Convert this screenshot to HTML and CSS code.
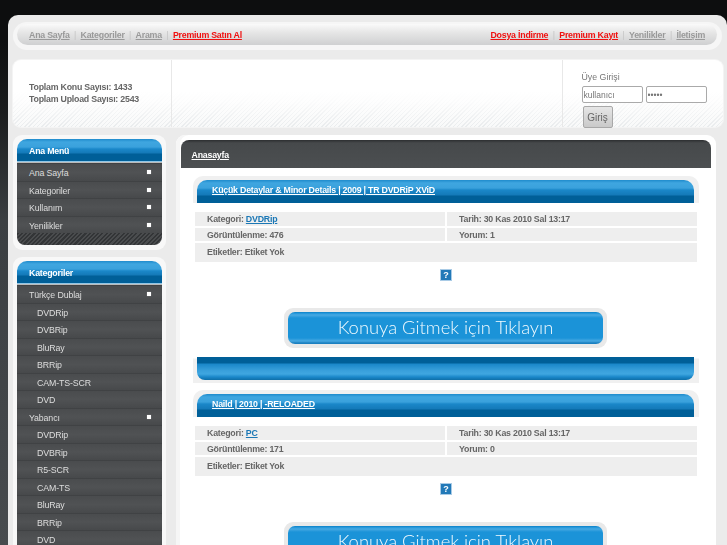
FILE: index.html
```html
<!DOCTYPE html>
<html lang="tr">
<head>
<meta charset="utf-8">
<title>Anasayfa</title>
<link rel="stylesheet" href="styles.css">
</head>
<body>
<div class="page">
  <nav class="topnav">
    <div class="topbar">
      <div class="links">
        <a href="#">Ana Sayfa</a><i>|</i><a href="#">Kategoriler</a><i>|</i><a href="#">Arama</a><i>|</i><a class="red" href="#">Premium Satın Al</a>
      </div>
      <div class="links">
        <a class="red" href="#">Dosya İndirme</a><i>|</i><a class="red" href="#">Premium Kayıt</a><i>|</i><a href="#">Yenilikler</a><i>|</i><a href="#">İletişim</a>
      </div>
    </div>
  </nav>
  <section class="info">
    <div class="stats">
      <p>Toplam Konu Sayısı: 1433</p>
      <p>Toplam Upload Sayısı: 2543</p>
    </div>
    <div class="blank"></div>
    <form class="login">
      <div class="login-title">Üye Girişi</div>
      <div class="login-fields">
        <input class="field" type="text" value="kullanıcı">
        <input class="field" type="password" value="*****">
      </div>
      <button class="submit" type="button">Giriş</button>
    </form>
  </section>
  <div class="columns">
    <aside class="sidebar">
      <div class="box">
        <h3 class="box-title">Ana Menü</h3>
        <ul class="menu">
          <li class="top">Ana Sayfa</li>
          <li class="top">Kategoriler</li>
          <li class="top">Kullanım</li>
          <li class="top">Yenilikler</li>
        </ul>
        <div class="menu-end"></div>
      </div>
      <div class="box">
        <h3 class="box-title">Kategoriler</h3>
        <ul class="menu">
          <li class="top">Türkçe Dublaj</li>
          <li class="sub">DVDRip</li>
          <li class="sub">DVBRip</li>
          <li class="sub">BluRay</li>
          <li class="sub">BRRip</li>
          <li class="sub">CAM-TS-SCR</li>
          <li class="sub">DVD</li>
          <li class="top">Yabancı</li>
          <li class="sub">DVDRip</li>
          <li class="sub">DVBRip</li>
          <li class="sub">R5-SCR</li>
          <li class="sub">CAM-TS</li>
          <li class="sub">BluRay</li>
          <li class="sub">BRRip</li>
          <li class="sub">DVD</li>
        </ul>
      </div>
    </aside>
    <main class="main">
      <h2 class="main-title"><a href="#">Anasayfa</a></h2>
      <div class="posts">
        <article class="post">
          <div class="post-head"><h4 class="post-bar"><a href="#">Küçük Detaylar &amp; Minor Details | 2009 | TR DVDRiP XViD</a></h4></div>
          <div class="meta">
            <div class="cell">Kategori: <a href="#">DVDRip</a></div>
            <div class="cell">Tarih: 30 Kas 2010 Sal 13:17</div>
            <div class="cell">Görüntülenme: 476</div>
            <div class="cell">Yorum: 1</div>
            <div class="cell wide">Etiketler: Etiket Yok</div>
          </div>
          <div class="broken"><span>?</span></div>
          <div class="banner"><div class="banner-in">Konuya Gitmek için Tıklayın</div></div>
          <div class="post-foot"><div class="foot-bar"></div></div>
        </article>
        <article class="post">
          <div class="post-head"><h4 class="post-bar"><a href="#">Naild | 2010 | -RELOADED</a></h4></div>
          <div class="meta">
            <div class="cell">Kategori: <a href="#">PC</a></div>
            <div class="cell">Tarih: 30 Kas 2010 Sal 13:17</div>
            <div class="cell">Görüntülenme: 171</div>
            <div class="cell">Yorum: 0</div>
            <div class="cell wide">Etiketler: Etiket Yok</div>
          </div>
          <div class="broken"><span>?</span></div>
          <div class="banner"><div class="banner-in">Konuya Gitmek için Tıklayın</div></div>
        </article>
      </div>
    </main>
  </div>
</div>
</body>
</html>
```
FILE: styles.css
```css
* { box-sizing: border-box; }
html, body { margin: 0; padding: 0; height: 545px; overflow: hidden; }
body {
  background: linear-gradient(#0d0e0f 0, #0d0e0f 40px, #1a1c1d 110px, #3b3f42 220px, #474b4e 545px);
  font-family: "Liberation Sans", Arial, sans-serif;
  font-size: 8.8px;
  letter-spacing: -0.22px;
  color: #666;
}
.page {
  margin: 15px 0 0 8px;
  width: 719px;
  height: 530px;
  padding-top: 7px;
  background: #ebebeb;
  border-radius: 10px 10px 0 0;
  overflow: hidden;
  filter: blur(0.35px);
}
.topnav {
  margin-left: 5px;
  width: 709px;
  height: 28px;
  padding: 2px 5px 5px 4px;
  background: #f6f6f6;
  border-radius: 14px;
}
.topbar {
  height: 21px;
  padding: 0 12px;
  display: flex;
  justify-content: space-between;
  align-items: center;
  border-radius: 12px;
  background: linear-gradient(#fafafa, #e6e6e6 40%, #cfd0d1);
}
.links { display: flex; align-items: center; font-weight: bold; }
.links a { color: #999; }
.links a.red { color: #f01010; }
.links i { width: 11px; text-align: center; font-style: normal; font-weight: normal; color: #c4c4c4; }
.info {
  margin: 10px 0 0 4.5px;
  width: 710px;
  height: 67px;
  display: flex;
  border-radius: 8px;
  background:
    linear-gradient(#fff 0, rgba(255,255,255,.85) 30%, rgba(255,255,255,.2) 100%) 0 100% / 100% 36px no-repeat,
    repeating-linear-gradient(135deg, #e4e7e9 0 1px, #f7f8f8 1px 3px) 0 100% / 100% 36px no-repeat,
    #fff;
  box-shadow: 0 0 0 1px #f4f4f4;
}
.stats {
  width: 159px;
  padding: 21px 0 0 16.5px;
  border-right: 1px solid #e8e8e8;
  font-weight: bold;
  line-height: 12px;
}
.stats p { margin: 0; }
.blank { width: 391px; border-right: 1px solid #e8e8e8; }
.login { padding: 12px 0 0 19px; flex: 1; position: relative; color: #777; letter-spacing: 0; }
.login-title { line-height: 10px; }
.login-fields { display: flex; gap: 3px; margin-top: 4px; }
.field {
  width: 61px;
  height: 17px;
  padding: 0 1px;
  border: 1px solid #aaa;
  border-radius: 2px;
  background: #fff;
  font: 8.5px "Liberation Sans", Arial, sans-serif;
  color: #777;
  outline: none;
}
.submit {
  display: block;
  width: 30px;
  height: 22px;
  margin: 3px 0 0 1px;
  padding: 0;
  border: 1px solid #a8a8a8;
  border-radius: 2px;
  background: linear-gradient(#e6e6e6, #c9c9c9);
  font: 10px "Liberation Sans", Arial, sans-serif;
  color: #666;
}
.columns { display: flex; align-items: flex-start; margin: 8px 0 0 5px; gap: 10px; }
.sidebar { width: 153px; display: flex; flex-direction: column; gap: 7px; }
.box { padding: 4px 4px 5px; background: #f8f8f8; border-radius: 9px; }
.box-title {
  margin: 0;
  height: 23px;
  padding: 1px 0 0 12px;
  display: flex;
  align-items: center;
  border-radius: 10px 10px 0 0;
  font-size: 8.8px;
  color: #fff;
  background: linear-gradient(#1f8bcc 0, #3fa6e0 3px, #3aa1dc 8px, #1a87c9 10px, #1479b8 14px, #005f98 15px, #005f98 22px, #8fc6e6 22px);
}
.menu { list-style: none; margin: 0; padding: 0; border-top: 1px solid #bbb; letter-spacing: -0.13px; }
.menu li {
  height: 17.5px;
  line-height: 18px;
  color: #ddd;
  background: linear-gradient(#4a4c4e, #505254 50%, #47494b);
  border-top: 1px solid #404244;
  position: relative;
}
.menu li.top { padding-left: 12px; }
.menu li.top::after {
  content: "";
  position: absolute;
  right: 11px;
  top: 6px;
  width: 4px;
  height: 4px;
  background: #fff;
  box-shadow: 0 0 1px #ccc;
}
.menu li.sub { padding-left: 20px; }
.menu-end {
  height: 12px;
  border-radius: 0 0 8px 8px;
  background: repeating-linear-gradient(135deg, #333537 0 1.5px, #4a4c4e 1.5px 3px);
}
.main {
  width: 540px;
  height: 410px;
  padding: 5px 0 0 0;
  background: #fff;
  border-radius: 9px 9px 0 0;
  box-shadow: inset 4px 0 #f6f6f6;
}
.main-title {
  margin: 0 5px;
  height: 28px;
  padding: 2px 0 0 10.5px;
  display: flex;
  align-items: center;
  font-size: 8.8px;
  color: #fff;
  border-radius: 8px 8px 0 0;
  background: linear-gradient(#2c2e30 0, #46494b 3px, #4c4f51 100%);
}
.main-title a { color: #fff; }
.posts { padding-left: 17px; }
.post { width: 506px; margin-top: 8px; }
.post + .post { margin-top: 7px; }
.post-head { height: 27px; padding: 4px 5px 0 4px; border-radius: 10px 10px 0 0; background: #f0f0f0; }
.post-bar {
  margin: 0;
  height: 23px;
  padding: 0 0 3px 15px;
  display: flex;
  align-items: center;
  font-size: 8.8px;
  border-radius: 10px 10px 0 0;
  background: linear-gradient(#1f8bcc 0, #3fa6e0 3px, #3aa1dc 8px, #1a87c9 10px, #1479b8 15px, #005f98 16px, #005f98 100%);
}
.post-bar a { color: #fff; }
.meta {
  display: grid;
  grid-template-columns: 250px 250px;
  grid-template-rows: 14px 13px 19px;
  gap: 2px;
  margin: 9px 0 0 2px;
  font-weight: bold;
  line-height: 14px;
}
.cell { padding-left: 12px; background: #eee; }
.cell a { color: #1a77b5; }
.wide { grid-column: 1 / 3; line-height: 19px; }
.broken { display: flex; justify-content: center; margin-top: 7px; height: 12px; }
.broken span {
  width: 12px;
  height: 12px;
  border: 1px solid #a9cbe6;
  background: #2279b8;
  color: #fff;
  font-size: 9px;
  font-weight: bold;
  line-height: 10px;
  text-align: center;
}
.banner {
  width: 323px;
  height: 40px;
  margin: 27px 0 0 91px;
  padding: 4px;
  border-radius: 9px;
  background: #e9e9e9;
}
.banner-in {
  height: 32px;
  border-radius: 7px;
  background: linear-gradient(#0f7fc4 0, #1b93d8 1px, #48a9e2 3px, #1b93d8 6px, #1b93d8 26px, #48a9e2 29px, #1b80c0 31px);
  color: #f2fbff;
  font-family: "Lato", sans-serif;
  font-weight: 300;
  font-size: 18.4px;
  letter-spacing: 0;
  line-height: 31px;
  text-align: center;
}
.post-foot { height: 26px; margin-top: 9px; padding: 0 5px 0 4px; background: linear-gradient(#fff 0, #fff 1px, #f0f0f0 2px); }
.foot-bar {
  height: 22.5px;
  border-radius: 0 0 8px 8px;
  background: linear-gradient(#005f98 0, #005f98 6px, #1a87c9 7px, #3aa1dc 14px, #3fa6e0 17px, #1a87c9 20px, #0f6fa8 100%);
}
```
